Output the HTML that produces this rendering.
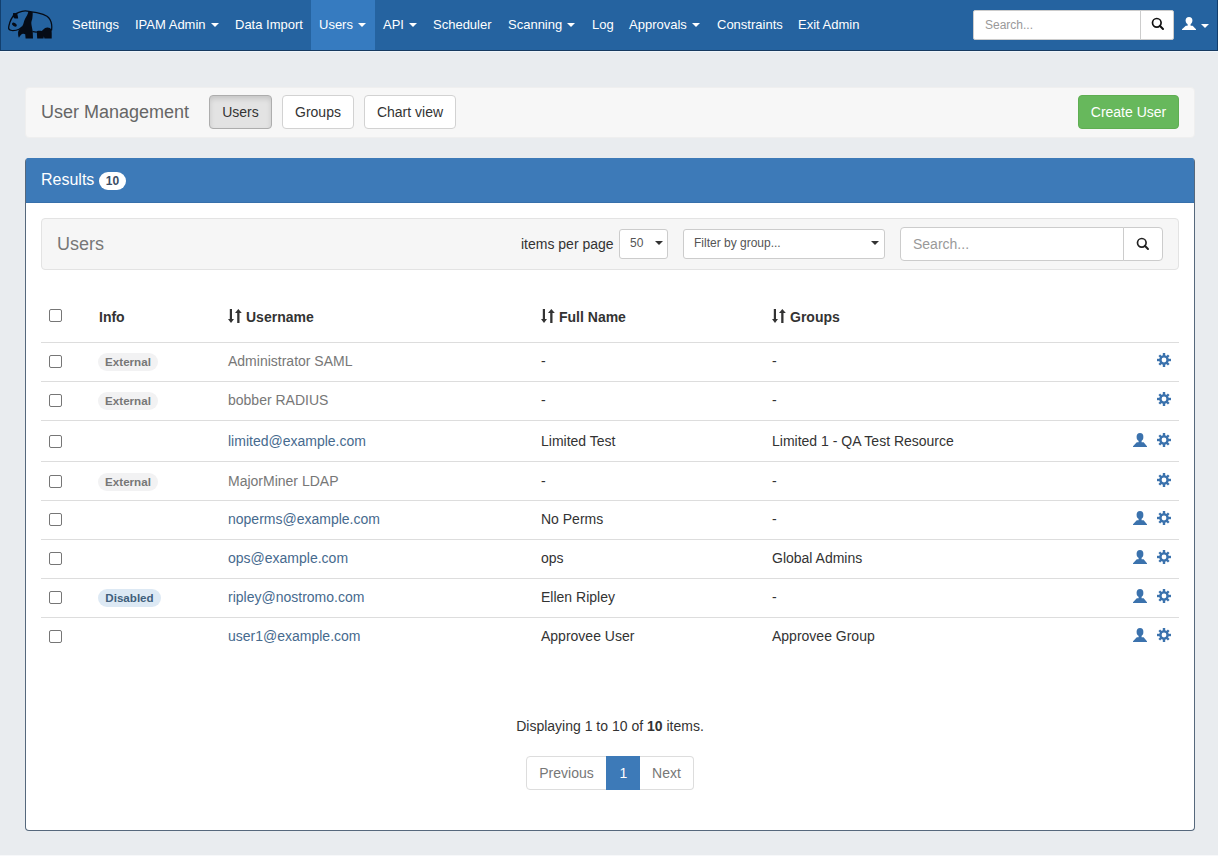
<!DOCTYPE html>
<html><head><meta charset="utf-8">
<style>
*{box-sizing:border-box;margin:0;padding:0}
html,body{width:1218px;height:856px;overflow:hidden}
body{background:#e9ecef;font-family:"Liberation Sans",sans-serif;font-size:14px;line-height:20px;color:#333;position:relative}
.abs{position:absolute}
#nav{left:0;top:0;width:1218px;height:51px;background:#2563a0;border-bottom:1px solid #173a60}
#navl{left:0;top:0;width:1px;height:50px;background:#123f6e}
.ni{position:absolute;top:0;height:50px;line-height:49px;color:#fff;font-size:13px;white-space:nowrap;padding:0 8px}
.caret{display:inline-block;width:0;height:0;border-top:4px solid;border-left:4px solid transparent;border-right:4px solid transparent;vertical-align:middle;margin-left:5px;position:relative;top:-1px}
#nav .act{background:#367bc0}
#tsearch{left:973px;top:10px;width:168px;height:30px;background:#fff;border:1px solid #ccc;border-radius:2px 0 0 2px;color:#999;font-size:12px;line-height:28px;padding-left:11px}
#tsbtn{left:1140px;top:10px;width:34px;height:30px;background:#fff;border:1px solid #ccc;border-left:1px solid #ccc;border-radius:0 2px 2px 0}
#navr{left:1217px;top:0;width:1px;height:50px;background:#123f6e}
.well1{left:25px;top:87px;width:1170px;height:51px;background:#f7f7f7;border:1px solid #efefef;border-radius:4px}
.btn{position:absolute;height:34px;border:1px solid #d2d2d2;border-radius:4px;background:#fff;color:#333;font-size:14px;line-height:20px;padding:6px 0;text-align:center;white-space:nowrap}
.btn.active{background:#e3e3e3;border-color:#adadad;box-shadow:inset 0 3px 5px rgba(0,0,0,.125)}
.btn.success{background:#67b85c;border-color:#5fae52;color:#fff}
#panel{left:25px;top:158px;width:1170px;height:673px;border:1px solid #56687c;border-top-color:#3d7ab8;border-radius:4px;background:#fff}
#ph{left:0;top:-1px;width:1168px;height:45px;background:#3d7ab8;border-bottom:1px solid #3770ab;border-radius:3px 3px 0 0}
.badge{display:inline-block;height:18px;padding:3px 7px;font-size:12px;font-weight:bold;line-height:12px;border-radius:10px;background:#fff;color:#3a4d66;vertical-align:middle}
.well2{left:41px;top:218px;width:1138px;height:52px;background:#f6f6f6;border:1px solid #e3e3e3;border-radius:4px}
.sel{position:absolute;height:30px;background:#fff;border:1px solid #ccc;border-radius:3px;font-size:12px;line-height:26px;color:#555;padding-left:10px;white-space:nowrap}
.sel .c{position:absolute;top:11px;width:0;height:0;border-top:4px solid #333;border-left:4px solid transparent;border-right:4px solid transparent}
.hl{position:absolute;left:41px;width:1138px;height:1px;background:#ddd}
.cb{position:absolute;left:49px;width:13px;height:13px;border:1px solid #767676;border-radius:2px;background:#fff}
.cell{position:absolute;white-space:nowrap;font-size:14px;line-height:20px}
.th{font-weight:bold;color:#333}
.g{color:#777}
.lnk{color:#466a8e}
.lab{position:absolute;left:98px;width:60px;text-align:center;height:18px;font-size:11.6px;font-weight:bold;line-height:18px;border-radius:9px;background:#f2f2f3;color:#777}
.lab.dis{left:98px;width:63px;background:#dde9f4;color:#3f5f7c}
.ic{position:absolute;width:14px;height:14px;fill:#3b72ad}
.sort{position:absolute;width:14px;height:14px;fill:#333}
.pg{position:absolute;top:756px;height:34px;border:1px solid #ddd;background:#fff;color:#777;padding:6px 0;text-align:center;font-size:14px;line-height:20px}
</style></head>
<body>
<svg width="0" height="0" style="position:absolute">
 <defs>
  <g id="i-user"><ellipse cx="7" cy="3.9" rx="3.4" ry="3.9"/><rect x="5.6" y="6" width="3" height="4"/><path d="M3.8 9.3 L10.6 9.3 L14 13.2 L14 14 L0 14 L0 13.2 Z"/></g>
  <g id="i-cog"><path fill-rule="evenodd" d="M7 2.2 A4.8 4.8 0 1 1 7 11.8 A4.8 4.8 0 1 1 7 2.2 Z M7 4.6 A2.4 2.4 0 1 0 7 9.4 A2.4 2.4 0 1 0 7 4.6 Z"/>
   <rect x="5.8" y="0" width="2.4" height="3"/><rect x="5.8" y="11" width="2.4" height="3"/>
   <rect x="0" y="5.8" width="3" height="2.4"/><rect x="11" y="5.8" width="3" height="2.4"/>
   <g transform="rotate(45 7 7)"><rect x="5.8" y="0.3" width="2.4" height="3"/><rect x="5.8" y="10.7" width="2.4" height="3"/><rect x="0.3" y="5.8" width="3" height="2.4"/><rect x="10.7" y="5.8" width="3" height="2.4"/></g>
  </g>
  <g id="i-search"><circle cx="5.8" cy="5.8" r="4.3" fill="none" stroke-width="1.7"/><path d="M8.8 8.8 L12 12" stroke-width="2" stroke-linecap="round"/></g>
  <g id="i-sort"><rect x="1.8" y="0" width="2.2" height="10"/><path d="M0 10 L6 10 L3 14 Z"/><rect x="9.2" y="4" width="2.3" height="10"/><path d="M7 4 L13.8 4 L10.35 0 Z"/></g>
 </defs>
</svg>
<div id="nav" class="abs">
  <svg class="abs" style="left:5px;top:5px" width="50" height="40" viewBox="0 0 50 40">
   <g fill="none" stroke="#050b16" stroke-width="1.25" stroke-linecap="round">
    <path d="M11.2 8.6 C13 7.5 15 6.8 17 6.3 C19 5.9 21 5.8 24 6.3 C27 6.8 30 7.4 32.7 7.9 C36 8.6 39.5 9.6 42 11.2 C44.5 13 46 15.5 46.6 19.3 C46.9 21 46.8 23 46.6 25"/>
    <path d="M8.2 11 C6.8 12.8 5.6 15 4.8 17.5 C4.2 19.5 3.6 21.8 3.6 23.2 C3.8 24.8 5 25.4 7 25.5 C9.5 25.6 12 25.2 14 24.2 C15 23.7 16 23 16.8 22.2"/>
    <path d="M28 26.6 C29.5 27 30.8 27.2 32 27"/>
   </g>
   <g fill="#050b16">
    <path d="M8.6 8.6 L11.7 8.7 L12.6 13 L9.8 12.9 L8.4 11.3 Z" stroke="#050b16" stroke-width="1.1" stroke-linejoin="round"/>
    <ellipse cx="9.4" cy="19.6" rx="2.7" ry="1.6" transform="rotate(33 9.4 19.6)"/>
    <path d="M23.4 6.6 L27.7 6.9 C27.8 9 27.6 11.5 27.3 13.5 C27 15 26.3 16.5 26.3 18 C26.4 20.5 27.3 23.5 27.7 26.2 L28 33.6 L20.6 33.6 L20.2 29.3 C19.3 28.7 18.2 28.6 17.2 29 C16 29.6 14.8 31.2 14 32.8 C13.2 31.5 13 29.5 13.1 27.2 C13.3 25.5 14.5 24.3 16.2 22.6 C17.5 21 18.2 19.5 18.6 18 C19.3 15 20.8 12.3 22 10.5 C22.7 9.3 23.1 8 23.4 6.6 Z"/>
    <path d="M31.8 26.2 C33 25.8 35 25.8 36.5 26 C37.3 25.5 37.9 24.6 38.4 24.4 C39.5 23 41 22.3 42.5 22.4 C44.3 22.5 45.6 23.2 46.3 24.3 C46.8 26 46.8 30 46.7 33.6 L39.4 33.6 L38.9 31.3 L38.5 33.6 L32.2 33.6 Z"/>
   </g>
  </svg>
  <div id="navl" class="abs"></div>
  <div class="abs" style="left:0;top:51px;width:1218px;height:1px;background:#eef5fb"></div>
  <div class="ni" style="left:64px">Settings</div>
  <div class="ni" style="left:127px">IPAM Admin<span class="caret"></span></div>
  <div class="ni" style="left:227px">Data Import</div>
  <div class="ni act" style="left:311px;width:64px">Users<span class="caret"></span></div>
  <div class="ni" style="left:375px">API<span class="caret"></span></div>
  <div class="ni" style="left:425px">Scheduler</div>
  <div class="ni" style="left:500px">Scanning<span class="caret"></span></div>
  <div class="ni" style="left:584px">Log</div>
  <div class="ni" style="left:621px">Approvals<span class="caret"></span></div>
  <div class="ni" style="left:709px">Constraints</div>
  <div class="ni" style="left:790px">Exit Admin</div>
  <div id="tsearch" class="abs">Search...</div>
  <div id="tsbtn" class="abs"></div>
  <svg class="abs" style="left:1151px;top:17px" width="14" height="14" viewBox="0 0 14 14" stroke="#111"><use href="#i-search"/></svg>
  <svg class="abs" style="left:1182px;top:17px" width="14" height="13" viewBox="0 0 14 14" preserveAspectRatio="none" fill="#fff"><use href="#i-user"/></svg>
  <span class="abs" style="left:1201px;top:24px;width:0;height:0;border-top:4px solid #fff;border-left:4px solid transparent;border-right:4px solid transparent"></span>
  <div id="navr" class="abs"></div>
</div>

<div class="abs well1"></div>
<div class="abs" style="left:41px;top:101px;font-size:18px;line-height:22px;color:#666">User Management</div>
<div class="btn active" style="left:209px;top:95px;width:63px">Users</div>
<div class="btn" style="left:282px;top:95px;width:72px">Groups</div>
<div class="btn" style="left:364px;top:95px;width:92px">Chart view</div>
<div class="btn success" style="left:1078px;top:95px;width:101px">Create User</div>

<div id="panel" class="abs">
  <div id="ph" class="abs"></div>
</div>
<div class="abs" style="left:41px;top:170px;font-size:16px;line-height:20px;color:#fff;white-space:nowrap">Results <span class="badge">10</span></div>

<div class="abs well2"></div>
<div class="abs" style="left:57px;top:233px;font-size:18px;line-height:22px;color:#777">Users</div>
<div class="abs" style="left:521px;top:234px;color:#333;white-space:nowrap">items per page</div>
<div class="sel" style="left:619px;top:229px;width:49px">50<span class="c" style="left:35px"></span></div>
<div class="sel" style="left:683px;top:229px;width:202px">Filter by group...<span class="c" style="left:187px"></span></div>
<div class="abs" style="left:900px;top:227px;width:224px;height:34px;background:#fff;border:1px solid #ccc;border-radius:4px 0 0 4px;color:#999;padding:6px 12px;white-space:nowrap">Search...</div>
<div class="abs" style="left:1123px;top:227px;width:40px;height:34px;background:#fff;border:1px solid #ccc;border-radius:0 4px 4px 0"></div>
<svg class="abs" style="left:1136px;top:237px" width="14" height="14" viewBox="0 0 14 14" stroke="#222"><use href="#i-search"/></svg>

<div class="cb" style="top:309px"></div>
<div class="cell th" style="left:99px;top:307px">Info</div>
<svg class="sort" style="left:228px;top:309px" viewBox="0 0 14 14"><use href="#i-sort"/></svg>
<div class="cell th" style="left:246px;top:307px">Username</div>
<svg class="sort" style="left:541px;top:309px" viewBox="0 0 14 14"><use href="#i-sort"/></svg>
<div class="cell th" style="left:559px;top:307px">Full Name</div>
<svg class="sort" style="left:772px;top:309px" viewBox="0 0 14 14"><use href="#i-sort"/></svg>
<div class="cell th" style="left:790px;top:307px">Groups</div>
<div class="hl" style="top:342px"></div>
<div class="hl" style="top:381px"></div>
<div class="cb" style="top:355px"></div>
<div class="lab" style="top:353px">External</div>
<div class="cell g" style="left:228px;top:351px">Administrator SAML</div>
<div class="cell" style="left:541px;top:351px">-</div>
<div class="cell" style="left:772px;top:351px">-</div>
<svg class="ic" style="left:1157px;top:353px" viewBox="0 0 14 14"><use href="#i-cog"/></svg>
<div class="hl" style="top:420px"></div>
<div class="cb" style="top:394px"></div>
<div class="lab" style="top:392px">External</div>
<div class="cell g" style="left:228px;top:390px">bobber RADIUS</div>
<div class="cell" style="left:541px;top:390px">-</div>
<div class="cell" style="left:772px;top:390px">-</div>
<svg class="ic" style="left:1157px;top:392px" viewBox="0 0 14 14"><use href="#i-cog"/></svg>
<div class="hl" style="top:461px"></div>
<div class="cb" style="top:435px"></div>
<div class="cell lnk" style="left:228px;top:431px">limited@example.com</div>
<div class="cell" style="left:541px;top:431px">Limited Test</div>
<div class="cell" style="left:772px;top:431px">Limited 1 - QA Test Resource</div>
<svg class="ic" style="left:1133px;top:433px" viewBox="0 0 14 14"><use href="#i-user"/></svg>
<svg class="ic" style="left:1157px;top:433px" viewBox="0 0 14 14"><use href="#i-cog"/></svg>
<div class="hl" style="top:500px"></div>
<div class="cb" style="top:475px"></div>
<div class="lab" style="top:473px">External</div>
<div class="cell g" style="left:228px;top:471px">MajorMiner LDAP</div>
<div class="cell" style="left:541px;top:471px">-</div>
<div class="cell" style="left:772px;top:471px">-</div>
<svg class="ic" style="left:1157px;top:473px" viewBox="0 0 14 14"><use href="#i-cog"/></svg>
<div class="hl" style="top:539px"></div>
<div class="cb" style="top:513px"></div>
<div class="cell lnk" style="left:228px;top:509px">noperms@example.com</div>
<div class="cell" style="left:541px;top:509px">No Perms</div>
<div class="cell" style="left:772px;top:509px">-</div>
<svg class="ic" style="left:1133px;top:511px" viewBox="0 0 14 14"><use href="#i-user"/></svg>
<svg class="ic" style="left:1157px;top:511px" viewBox="0 0 14 14"><use href="#i-cog"/></svg>
<div class="hl" style="top:578px"></div>
<div class="cb" style="top:552px"></div>
<div class="cell lnk" style="left:228px;top:548px">ops@example.com</div>
<div class="cell" style="left:541px;top:548px">ops</div>
<div class="cell" style="left:772px;top:548px">Global Admins</div>
<svg class="ic" style="left:1133px;top:550px" viewBox="0 0 14 14"><use href="#i-user"/></svg>
<svg class="ic" style="left:1157px;top:550px" viewBox="0 0 14 14"><use href="#i-cog"/></svg>
<div class="hl" style="top:617px"></div>
<div class="cb" style="top:591px"></div>
<div class="lab dis" style="top:589px">Disabled</div>
<div class="cell lnk" style="left:228px;top:587px">ripley@nostromo.com</div>
<div class="cell" style="left:541px;top:587px">Ellen Ripley</div>
<div class="cell" style="left:772px;top:587px">-</div>
<svg class="ic" style="left:1133px;top:589px" viewBox="0 0 14 14"><use href="#i-user"/></svg>
<svg class="ic" style="left:1157px;top:589px" viewBox="0 0 14 14"><use href="#i-cog"/></svg>
<div class="cb" style="top:630px"></div>
<div class="cell lnk" style="left:228px;top:626px">user1@example.com</div>
<div class="cell" style="left:541px;top:626px">Approvee User</div>
<div class="cell" style="left:772px;top:626px">Approvee Group</div>
<svg class="ic" style="left:1133px;top:628px" viewBox="0 0 14 14"><use href="#i-user"/></svg>
<svg class="ic" style="left:1157px;top:628px" viewBox="0 0 14 14"><use href="#i-cog"/></svg>
<div class="abs" style="left:0;top:716px;width:1218px;text-align:center;color:#333;padding-left:2px">Displaying 1 to 10 of <b>10</b> items.</div>
<div class="pg" style="left:526px;width:81px;border-radius:4px 0 0 4px">Previous</div>
<div class="pg" style="left:606px;width:35px;background:#3d7ab8;border-color:#3d7ab8;color:#fff">1</div>
<div class="pg" style="left:640px;width:54px;border-left:none;border-radius:0 4px 4px 0">Next</div>
<div class="abs" style="left:0;top:855px;width:1218px;height:1px;background:#f7f8fa"></div>
</body></html>
